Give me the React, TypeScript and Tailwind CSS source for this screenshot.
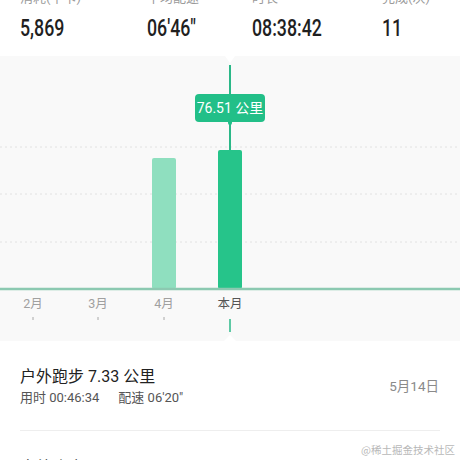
import React from "react";

const stats = [
  { label: "消耗(千卡)", value: "5,869", x: "w-[127px]" },
  { label: "平均配速", value: "06'46\"", x: "w-[105px]" },
  { label: "时长", value: "08:38:42", x: "w-[130px]" },
  { label: "完成(次)", value: "11", x: "flex-1" },
];

const months = [
  { name: "2月", x: 33, h: 0 },
  { name: "3月", x: 98, h: 0 },
  { name: "4月", x: 164, h: 131 },
  { name: "本月", x: 230, h: 139, active: true },
];

const cjk = { fontFamily: "Roboto, 'Noto Sans CJK SC', sans-serif" };

function Chart() {
  // chart box spans page y 56..341, so local y = page y - 56
  const base = 233;
  return (
    <div className="relative h-[285px] bg-[#f9f9f9]">
      <svg width="460" height="285" className="absolute inset-0" style={cjk}>
        {/* notches at the cursor */}
        <polygon points="225,0 235,0 230,7" fill="#ffffff" />
        <polygon points="224,285 236,285 230,279" fill="#ffffff" />

        {[91, 138, 186].map((y) => (
          <line key={y} x1="0" x2="460" y1={y} y2={y} stroke="#e2e2e2" strokeDasharray="2 3" />
        ))}

        {/* cursor */}
        <line x1="230" x2="230" y1="9" y2="95" stroke="#2bb888" strokeWidth="2" />

        {months.map((m) =>
          m.h > 0 ? (
            <rect
              key={m.name}
              x={m.x - 12}
              y={base - m.h}
              width="24"
              height={m.h}
              rx="2"
              fill={m.active ? "#26c48a" : "#8fdfbf"}
            />
          ) : null
        )}

        <line x1="0" x2="460" y1={base} y2={base} stroke="#8cc9b1" strokeWidth="2.5" />

        {months.map((m) => (
          <g key={"l" + m.name}>
            <text
              x={m.x}
              y="252"
              textAnchor="middle"
              fontSize="12.5"
              fill={m.active ? "#555555" : "#a0a0a0"}
            >
              {m.name}
            </text>
            {m.active ? (
              <line x1={m.x} x2={m.x} y1="263" y2="276" stroke="#2bb888" strokeWidth="1.5" />
            ) : (
              <line x1={m.x} x2={m.x} y1="261" y2="264" stroke="#a8a8a8" strokeWidth="1" />
            )}
          </g>
        ))}
      </svg>

      {/* tooltip */}
      <div className="absolute left-[195px] top-[38px] flex h-[28px] w-[70px] items-center justify-center rounded-[4px] bg-[#22bf88]">
        <span className="text-[14px] leading-none text-white" style={cjk}>
          76.51 公里
        </span>
        <div className="absolute bottom-[-3px] left-[33px] h-[6px] w-[4px] rounded-full bg-[#22bf88]" />
      </div>
    </div>
  );
}

export default function App() {
  return (
    <div className="h-[460px] w-[460px] overflow-hidden bg-white" style={cjk}>
      {/* summary stats, scrolled so labels are cut */}
      <div className="-mt-[12px] flex h-[68px] pl-[20px]">
        {stats.map((s) => (
          <div key={s.label} className={"flex flex-col " + s.x}>
            <span className="text-[13px] leading-[20px] text-[#9a9a9a]">{s.label}</span>
            <span className="mt-[8px] inline-block origin-left scale-x-[0.74] whitespace-nowrap text-[24px] leading-[24px] font-medium text-[#1f1f1f]">
              {s.value}
            </span>
          </div>
        ))}
      </div>

      <Chart />

      {/* records */}
      <div className="px-[20px]">
        <div className="flex items-center justify-between border-b border-[#eeeeee] pt-[25px] pb-[23px]">
          <div className="flex flex-col">
            <span className="text-[16px] leading-[22px] text-[#222222]">户外跑步 7.33 公里</span>
            <span className="mt-[1px] text-[13px] leading-[18px] text-[#555555]">
              用时 00:46:34<span className="ml-[19px]">配速 06'20"</span>
            </span>
          </div>
          <span className="mr-[1px] text-[13.5px] text-[#8a8a8a]">5月14日</span>
        </div>
        <div className="relative pt-[25px]">
          <span className="text-[16px] leading-[22px] text-[#222222]">户外跑步 6.02 公里</span>
          <span
            className="absolute right-[-15px] top-[11px] text-[10.5px] text-[#b8b8b8]"
            style={{ fontFamily: "'Noto Sans CJK SC', serif" }}
          >
            @稀土掘金技术社区
          </span>
        </div>
      </div>
    </div>
  );
}
